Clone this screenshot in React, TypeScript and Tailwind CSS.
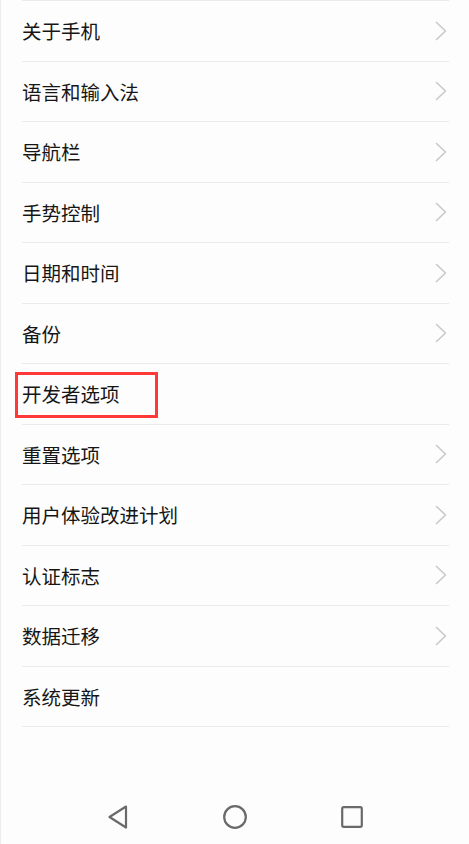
import React from 'react';

type Item = { label: string; arrow: boolean; marked?: boolean };

const items: Item[] = [
  { label: '关于手机', arrow: true },
  { label: '语言和输入法', arrow: true },
  { label: '导航栏', arrow: true },
  { label: '手势控制', arrow: true },
  { label: '日期和时间', arrow: true },
  { label: '备份', arrow: true },
  { label: '开发者选项', arrow: false, marked: true },
  { label: '重置选项', arrow: true },
  { label: '用户体验改进计划', arrow: true },
  { label: '认证标志', arrow: true },
  { label: '数据迁移', arrow: true },
  { label: '系统更新', arrow: false },
];

const Chevron = () => (
  <svg width="12" height="20" viewBox="0 0 12 20" fill="none">
    <path d="M1.5 1.5 L10.5 10 L1.5 18.5" stroke="#c9c9c9" strokeWidth="1.6" strokeLinecap="round" strokeLinejoin="round" />
  </svg>
);

const Row: React.FC<{ item: Item }> = ({ item }) => (
  <div className="relative h-[60.5px] border-b border-[#ebebeb] flex items-center justify-between pr-[2px]">
    <span className="text-[19.5px] text-[#161616] leading-none">{item.label}</span>
    {item.arrow && <Chevron />}
    {item.marked && (
      <div className="absolute left-[-7px] top-[8px] w-[143px] h-[46px] border-[3px] border-[#ff3838]" />
    )}
  </div>
);

export default function App() {
  return (
    <div
      className="h-[844px] w-[469px] bg-[#fdfdfd] border-l border-[#ececec] flex flex-col overflow-hidden"
      style={{ fontFamily: '"Noto Sans CJK SC", "Noto Sans", sans-serif' }}
    >
      <div className="pl-[21px]">
        <div className="border-t border-[#ebebeb] w-[427px]" />
        <div className="w-[427px]">
          {items.map((it) => (
            <Row key={it.label} item={it} />
          ))}
        </div>
      </div>
      <div className="flex-1" />
      <div className="h-[54px] flex items-center justify-center">
        <div className="w-[117px] flex justify-center">
          <svg width="24" height="26" viewBox="0 0 24 26" fill="none">
            <path d="M20 2.5 L3.5 13 L20 23.5 Z" stroke="#6a6a6a" strokeWidth="2.2" strokeLinejoin="round" />
          </svg>
        </div>
        <div className="w-[117px] flex justify-center">
          <svg width="26" height="26" viewBox="0 0 26 26" fill="none">
            <circle cx="13" cy="13" r="10.8" stroke="#6a6a6a" strokeWidth="2.2" />
          </svg>
        </div>
        <div className="w-[117px] flex justify-center">
          <svg width="24" height="24" viewBox="0 0 24 24" fill="none">
            <rect x="2.2" y="2.2" width="19.6" height="19.6" rx="1.5" stroke="#6a6a6a" strokeWidth="2.2" />
          </svg>
        </div>
      </div>
    </div>
  );
}
